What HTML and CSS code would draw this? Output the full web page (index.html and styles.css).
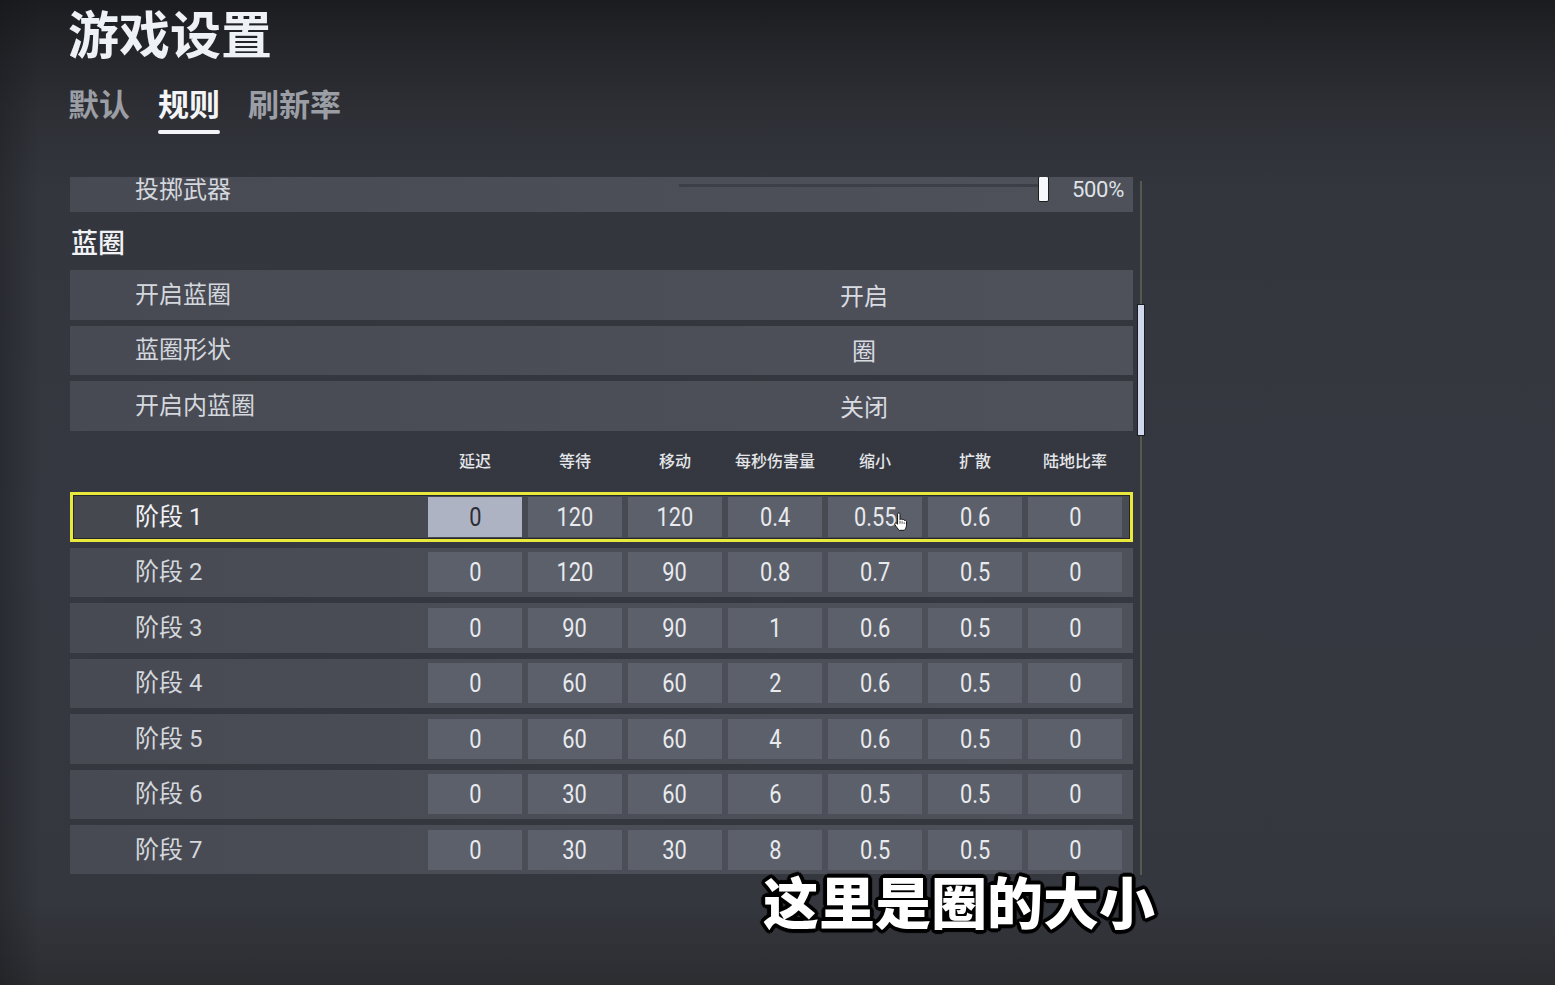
FILE: index.html
```html
<!DOCTYPE html>
<html lang="zh-CN">
<head>
<meta charset="utf-8">
<title>游戏设置</title>
<link rel="stylesheet" href="styles.css">
</head>
<body>
<div class="screen">
  <header class="head">
    <h1 class="title">游戏设置</h1>
    <nav class="tabs">
      <span class="tab">默认</span>
      <span class="tab active">规则</span>
      <span class="tab">刷新率</span>
    </nav>
  </header>

  <div class="panel">
    <div class="list">
      <div class="list-inner">
        <div class="row slider-row">
          <span class="label">投掷武器</span>
          <div class="slider">
            <div class="track"></div>
            <div class="knob"></div>
          </div>
          <span class="pct num">500%</span>
        </div>

        <div class="section">蓝圈</div>

        <div class="row opt"><span class="label">开启蓝圈</span><span class="val">开启</span></div>
        <div class="row opt"><span class="label">蓝圈形状</span><span class="val">圈</span></div>
        <div class="row opt"><span class="label">开启内蓝圈</span><span class="val">关闭</span></div>

        <div class="thead">
          <span class="spacer"></span>
          <div class="cols">
            <span class="th">延迟</span>
            <span class="th">等待</span>
            <span class="th">移动</span>
            <span class="th">每秒伤害量</span>
            <span class="th">缩小</span>
            <span class="th">扩散</span>
            <span class="th">陆地比率</span>
          </div>
        </div>

        <div class="row stage sel">
          <span class="label">阶段 1</span>
          <div class="cols">
            <span class="cell hot"><span class="n">0</span></span>
            <span class="cell"><span class="n">120</span></span>
            <span class="cell"><span class="n">120</span></span>
            <span class="cell"><span class="n">0.4</span></span>
            <span class="cell"><span class="n">0.55</span>
              <svg class="cursor" viewBox="0 0 16 22" width="14" height="20" aria-hidden="true"><path d="M5.2 2.1c0-.9.6-1.5 1.4-1.5s1.4.6 1.4 1.5v6.2c.3-.6.9-.9 1.5-.8.6.1 1 .6 1.1 1.1.3-.4.9-.6 1.4-.5.6.1 1 .6 1.1 1.2.4-.3.9-.4 1.4-.2.6.2.9.8.9 1.4v4.2c0 2.6-1.3 4.6-2.7 5.8H7.1c-1.1-1.1-3.7-4.5-4.8-6.3-.5-.8-.3-1.7.4-2 .7-.3 1.4 0 1.8.5l.7.9z" fill="#fff" stroke="#111" stroke-width="1.1" stroke-linejoin="round"/><path d="M8 9.5v3.5M10.4 10.3v2.7M12.8 11.3v1.9" stroke="#111" stroke-width=".8" fill="none"/></svg>
            </span>
            <span class="cell"><span class="n">0.6</span></span>
            <span class="cell"><span class="n">0</span></span>
          </div>
        </div>

        <div class="row stage">
          <span class="label">阶段 2</span>
          <div class="cols">
            <span class="cell"><span class="n">0</span></span><span class="cell"><span class="n">120</span></span><span class="cell"><span class="n">90</span></span><span class="cell"><span class="n">0.8</span></span><span class="cell"><span class="n">0.7</span></span><span class="cell"><span class="n">0.5</span></span><span class="cell"><span class="n">0</span></span>
          </div>
        </div>
        <div class="row stage">
          <span class="label">阶段 3</span>
          <div class="cols">
            <span class="cell"><span class="n">0</span></span><span class="cell"><span class="n">90</span></span><span class="cell"><span class="n">90</span></span><span class="cell"><span class="n">1</span></span><span class="cell"><span class="n">0.6</span></span><span class="cell"><span class="n">0.5</span></span><span class="cell"><span class="n">0</span></span>
          </div>
        </div>
        <div class="row stage">
          <span class="label">阶段 4</span>
          <div class="cols">
            <span class="cell"><span class="n">0</span></span><span class="cell"><span class="n">60</span></span><span class="cell"><span class="n">60</span></span><span class="cell"><span class="n">2</span></span><span class="cell"><span class="n">0.6</span></span><span class="cell"><span class="n">0.5</span></span><span class="cell"><span class="n">0</span></span>
          </div>
        </div>
        <div class="row stage">
          <span class="label">阶段 5</span>
          <div class="cols">
            <span class="cell"><span class="n">0</span></span><span class="cell"><span class="n">60</span></span><span class="cell"><span class="n">60</span></span><span class="cell"><span class="n">4</span></span><span class="cell"><span class="n">0.6</span></span><span class="cell"><span class="n">0.5</span></span><span class="cell"><span class="n">0</span></span>
          </div>
        </div>
        <div class="row stage">
          <span class="label">阶段 6</span>
          <div class="cols">
            <span class="cell"><span class="n">0</span></span><span class="cell"><span class="n">30</span></span><span class="cell"><span class="n">60</span></span><span class="cell"><span class="n">6</span></span><span class="cell"><span class="n">0.5</span></span><span class="cell"><span class="n">0.5</span></span><span class="cell"><span class="n">0</span></span>
          </div>
        </div>
        <div class="row stage">
          <span class="label">阶段 7</span>
          <div class="cols">
            <span class="cell"><span class="n">0</span></span><span class="cell"><span class="n">30</span></span><span class="cell"><span class="n">30</span></span><span class="cell"><span class="n">8</span></span><span class="cell"><span class="n">0.5</span></span><span class="cell"><span class="n">0.5</span></span><span class="cell"><span class="n">0</span></span>
          </div>
        </div>
      </div>
    </div>
    <div class="scrollbar"><div class="thumb"></div></div>
  </div>

  <div class="caption">这里是圈的大小</div>
</div>
</body>
</html>
```

FILE: styles.css
```css
* { box-sizing: border-box; }

html, body {
  margin: 0;
  padding: 0;
}

body {
  width: 1555px;
  height: 985px;
  overflow: hidden;
  font-family: "Noto Sans CJK SC", "Noto Sans", sans-serif;
  color: #d6d9df;
  background:
    linear-gradient(90deg, rgba(20,20,24,0.35) 0, rgba(20,20,24,0) 40px),
    linear-gradient(180deg, #1b1c1f 0, #232428 40px, #2d2f35 110px, #33363d 190px, #353840 520px, #34373e 900px, #2c2d31 985px);
}

.screen {
  position: relative;
  width: 1555px;
  height: 985px;
  padding: 2px 0 0 68px;
}

/* header */
.title {
  margin: 0;
  font-size: 51px;
  line-height: 1.2;
  font-weight: 700;
  color: #eef1f5;
}

.tabs {
  display: flex;
  gap: 28px;
  margin-top: 24px;
}

.tab {
  display: flex;
  flex-direction: column;
  font-size: 31px;
  line-height: 1;
  font-weight: 700;
  color: #9b9ea4;
}

.tab::after {
  content: "";
  display: block;
  height: 4px;
  margin-top: 12px;
  border-radius: 2px;
  background: transparent;
}

.tab.active { color: #f4f5f8; }
.tab.active::after { background: #f4f5f8; }

/* panel */
.panel {
  display: flex;
  gap: 4px;
  margin-top: 43px;
  margin-left: 2px;
  height: 697px;
}

.list {
  width: 1063px;
  height: 697px;
  overflow: hidden;
}

.list-inner {
  margin-top: -15px;
  display: flex;
  flex-direction: column;
}

.row {
  display: flex;
  align-items: center;
  height: 49.5px;
  padding-left: 65px;
  background: linear-gradient(90deg, #474a52 0, #4b4e57 50%, #4e515a 100%);
  flex-shrink: 0;
}

.label {
  font-size: 24px;
  line-height: 1;
  color: #d4d7dd;
  font-family: Roboto, "Noto Sans CJK SC", sans-serif;
}

.opt { margin-bottom: 6px; }

.opt .label { flex: 1; }

.val {
  width: 538px;
  text-align: center;
  font-size: 24px;
  line-height: 1;
  color: #d8dbe1;
}

/* slider row */
.slider-row .label {
  flex: 1;
  margin-top: 6px;
}

.slider {
  display: flex;
  align-items: flex-start;
  align-self: flex-start;
  width: 370px;
  height: 49.5px;
}

.track {
  width: 362px;
  height: 3px;
  margin-top: 22px;
  background: #3c3f47;
}

.knob {
  width: 11px;
  height: 26px;
  margin-top: 14px;
  margin-left: -3px;
  background: #f7f8fb;
  border: 1px solid #1c1d21;
  border-radius: 2px;
}

.pct {
  width: 60px;
  margin-left: 15px;
  margin-right: 9px;
  margin-top: 6px;
  text-align: right;
  font-size: 22px;
  line-height: 1;
  color: #dfe2e7;
}

.num {
  font-family: Roboto, "Liberation Sans", sans-serif;
  letter-spacing: -0.3px;
}

/* section */
.section {
  height: 58.5px;
  padding-top: 16px;
  padding-left: 1px;
  font-size: 27px;
  line-height: 1;
  font-weight: 500;
  color: #f2f3f6;
}

/* table header */
.thead {
  display: flex;
  height: 55.5px;
  padding-top: 15px;
  padding-left: 65px;
}

.spacer { flex: 1; }

.cols {
  display: flex;
  gap: 6px;
  margin-right: 11px;
}

.th {
  width: 94px;
  text-align: center;
  font-size: 16px;
  line-height: 1;
  font-weight: 500;
  color: #e4e6ea;
}

/* stage rows */
.stage {
  margin-bottom: 6px;
}

.stage .label { flex: 1; }

.cell {
  position: relative;
  display: flex;
  align-items: center;
  justify-content: center;
  width: 94px;
  height: 40px;
  background: #5c606a;
  color: #e8eaee;
}

.n {
  display: inline-block;
  font-family: Roboto, "Liberation Sans", sans-serif;
  font-size: 26px;
  line-height: 1;
  transform: scaleX(0.84);
}

.sel {
  box-shadow: inset 0 0 0 3px #e9e83c, inset 0 0 0 4px #25262a;
  background: linear-gradient(90deg, #45484f 0, #484b53 100%);
}

.sel .label { color: #f1f2f5; }

.cell.hot {
  background: #aeb3c4;
  color: #2b2d33;
}

.cursor {
  position: absolute;
  left: 65px;
  top: 15px;
}

/* scrollbar */
.scrollbar {
  width: 8px;
  height: 694px;
  margin-top: 4px;
  background: linear-gradient(90deg, transparent 3px, #57594f 3px, #57594f 5px, transparent 5px);
}

.thumb {
  width: 8px;
  height: 132px;
  margin-top: 123px;
  background: #d1d8ee;
  border: 1px solid #1c1e23;
}

/* caption overlay */
.caption {
  position: absolute;
  left: 763px;
  top: 875px;
  font-size: 56px;
  line-height: 0.9;
  font-weight: 900;
  color: #ffffff;
  white-space: nowrap;
  text-shadow:
    3px 0 0 #000, -3px 0 0 #000, 0 3px 0 #000, 0 -3px 0 #000,
    2px 2px 0 #000, -2px 2px 0 #000, 2px -2px 0 #000, -2px -2px 0 #000,
    3px 2px 0 #000, -3px 2px 0 #000, 3px -2px 0 #000, -3px -2px 0 #000,
    2px 3px 0 #000, -2px 3px 0 #000, 2px -3px 0 #000, -2px -3px 0 #000,
    4px 0 1px #000, -4px 0 1px #000, 0 4px 1px #000, 0 -4px 1px #000;
}
```
